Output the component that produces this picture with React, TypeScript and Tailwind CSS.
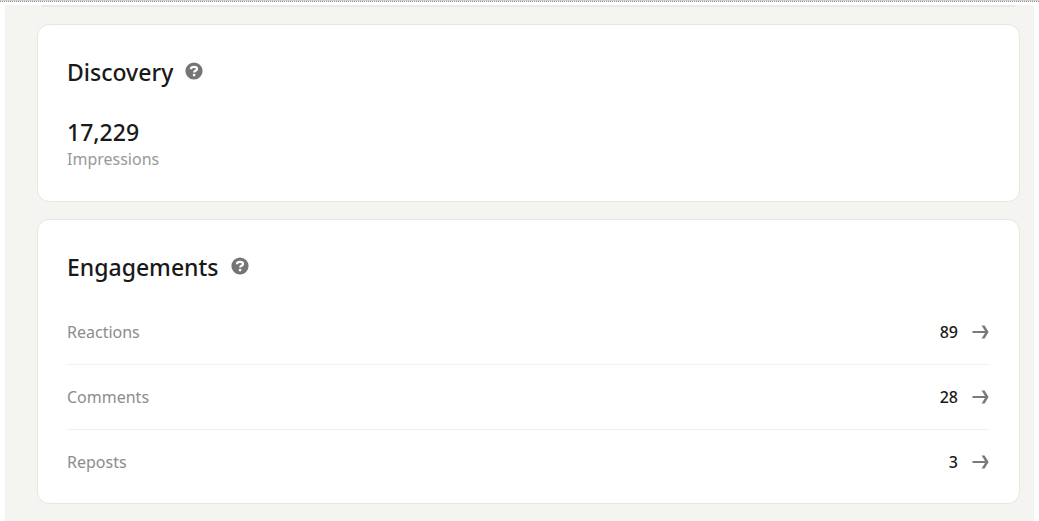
import React from "react";

type HeadingProps = {
  id: string;
  title: string;
};

type MetricRowProps = {
  label: string;
  value: number;
};

const engagements: MetricRowProps[] = [
  { label: "Reactions", value: 89 },
  { label: "Comments", value: 28 },
  { label: "Reposts", value: 3 },
];

const HelpIcon = () => (
  <svg viewBox="0 0 18 18" className="h-[18px] w-[18px]" aria-hidden="true">
    <circle cx="9" cy="9" r="8.6" fill="#757575" />
    <path
      d="M5.9 7.2C6 5.5 7.2 4.9 9 4.9c1.9 0 3 .7 3 2 0 1-.7 1.5-1.6 1.9-.8.4-1.2.7-1.2 1.7"
      fill="none"
      stroke="#fff"
      strokeWidth="2.3"
    />
    <circle cx="9.1" cy="13.1" r="1.4" fill="#fff" />
  </svg>
);

const ArrowIcon = () => (
  <svg viewBox="0 0 17 16" className="h-4 w-[17px]" aria-hidden="true">
    <path d="M0.5 6.9h12.5L9.6 1.4h3L16.6 8l-4 6.6h-3l3.4-5.5H0.5z" fill="#7a7a7a" />
  </svg>
);

const CardHeading = ({ id, title }: HeadingProps) => {
  return (
    <div className="flex items-center gap-3">
      <h2 id={id} className="text-[23px] leading-8 font-medium text-[#191919]">
        {title}
      </h2>
      <button type="button" aria-label={`About ${title}`} className="mb-0.5">
        <HelpIcon />
      </button>
    </div>
  );
};

const MetricRow = ({ label, value }: MetricRowProps) => {
  return (
    <li className="border-b border-[#f0f0f0] last:border-b-0">
      <a href="#" className="flex h-16 items-center justify-between">
        <span className="text-base text-[#8c8c8c]">{label}</span>
        <span className="flex items-center gap-3.5">
          <span className="text-base font-medium text-[#191919]">{value}</span>
          <ArrowIcon />
        </span>
      </a>
    </li>
  );
};

const App = () => {
  return (
    <div className="flex min-h-screen flex-col bg-white font-['Noto_Sans',sans-serif]">
      <div className="border-t border-[#cfcfcf]" />
      <div className="border-t border-dotted border-[#8c8c8c]" />
      <main className="mx-[5px] mt-[3px] flex-1 bg-[#f4f5f0] pr-3.5 pb-4 pl-8">
        {/* bottom edge of the card scrolled out above */}
        <div className="mx-1 h-[2px] rounded-b-lg bg-[#e9e9e5]" />
        <section
          aria-labelledby="discovery"
          className="mt-[17px] rounded-xl border border-[#e6e6e2] bg-white pt-[31px] pr-[30px] pb-[31px] pl-[29px]"
        >
          <CardHeading id="discovery" title="Discovery" />
          <p className="mt-7 text-[23px] leading-8 font-medium text-[#191919]">17,229</p>
          <p className="text-base leading-[22px] text-[#999]">Impressions</p>
        </section>
        <section
          aria-labelledby="engagements"
          className="mt-[17px] rounded-xl border border-[#e6e6e2] bg-white pt-[31px] pr-[30px] pb-[9px] pl-[29px]"
        >
          <CardHeading id="engagements" title="Engagements" />
          <ul className="mt-[17px]">
            {engagements.map((item) => (
              <MetricRow key={item.label} label={item.label} value={item.value} />
            ))}
          </ul>
        </section>
      </main>
    </div>
  );
};

export default App;
